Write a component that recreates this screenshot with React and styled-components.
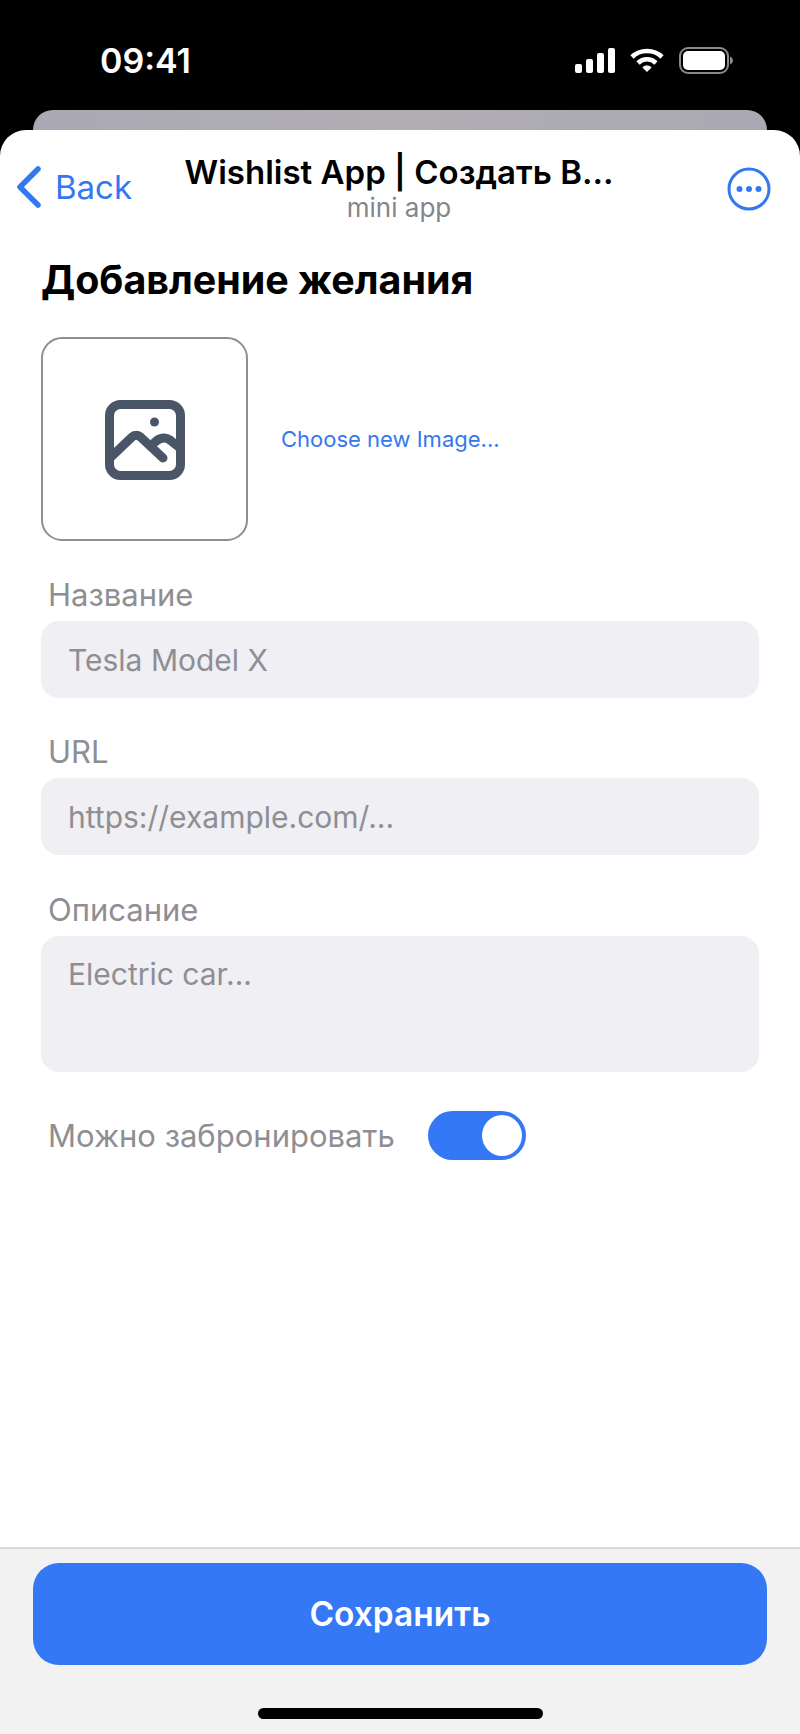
import styled, { createGlobalStyle } from "styled-components";

const GlobalStyle = createGlobalStyle`
  * { box-sizing: border-box; }
  html, body { margin: 0; padding: 0; background: #000; }
  body { font-family: Inter, "Noto Sans", sans-serif; }
`;

const SignalIcon = () => (
  <svg width="40" height="25" viewBox="0 0 40 25" fill="#fff">
    <rect x="0" y="16" width="7" height="9" rx="2" />
    <rect x="11" y="11" width="7" height="14" rx="2" />
    <rect x="22" y="5" width="7" height="20" rx="2" />
    <rect x="33" y="0" width="7" height="25" rx="2" />
  </svg>
);

const WifiIcon = () => (
  <svg width="34" height="25" viewBox="0 0 34 25" fill="none" stroke="#fff" strokeWidth="4.6">
    <path d="M2 9 C10 1 24 1 32 9" />
    <path d="M8 15 C13 10 21 10 26 15" />
    <path d="M17 24 L12.4 19.4 C15 17 19 17 21.6 19.4 Z" fill="#fff" stroke="none" />
  </svg>
);

const BatteryIcon = () => (
  <svg width="54" height="27" viewBox="0 0 54 27">
    <rect x="1" y="1" width="48" height="25" rx="8" fill="none" stroke="#8a8a8e" strokeWidth="2" />
    <rect x="4" y="4" width="42" height="19" rx="5" fill="#fff" />
    <path d="M51 9.5 C53 10.5 54 12 54 13.5 C54 15 53 16.5 51 17.5 Z" fill="#8a8a8e" />
  </svg>
);

const BackIcon = () => (
  <svg width="26" height="44" viewBox="0 0 26 44" fill="none" stroke="#3478f0" strokeWidth="5.5" strokeLinecap="round" strokeLinejoin="round">
    <path d="M22 4 L4 22 L22 40" />
  </svg>
);

const MoreIcon = () => (
  <svg width="44" height="44" viewBox="0 0 44 44">
    <circle cx="22" cy="22" r="20" fill="none" stroke="#3478f0" strokeWidth="3" />
    <circle cx="12.5" cy="22" r="3" fill="#3478f0" />
    <circle cx="22" cy="22" r="3" fill="#3478f0" />
    <circle cx="31.5" cy="22" r="3" fill="#3478f0" />
  </svg>
);

const ImageIcon = () => (
  <svg width="80" height="80" viewBox="0 0 80 80" fill="none" stroke="#4b5568" strokeWidth="9" strokeLinecap="round" strokeLinejoin="round">
    <rect x="4.5" y="4.5" width="71" height="71" rx="11" />
    <path d="M6 57 L27 37 C29.5 34.5 33 34.5 35.5 37 L58 58" strokeLinecap="round" />
    <path d="M49 43 C54 37.5 60 36.5 65 40 L75 48" />
    <circle cx="49.5" cy="22" r="4.5" fill="#4b5568" stroke="none" />
  </svg>
);

const App = () => {
  return (
    <Screen>
      <GlobalStyle />
      <StatusBar>
        <Time>09:41</Time>
        <StatusIcons>
          <SignalIcon />
          <WifiIcon />
          <BatteryIcon />
        </StatusIcons>
      </StatusBar>
      <PeekCard />
      <Sheet>
        <NavBar>
          <BackButton>
            <BackIcon />
            <span>Back</span>
          </BackButton>
          <NavTitle>
            <AppName>Wishlist App | Создать В...</AppName>
            <AppKind>mini app</AppKind>
          </NavTitle>
          <MoreButton>
            <MoreIcon />
          </MoreButton>
        </NavBar>

        <Content>
          <Heading>Добавление желания</Heading>
          <ImageRow>
            <ImageBox>
              <ImageIcon />
            </ImageBox>
            <ChooseLink>Choose new Image...</ChooseLink>
          </ImageRow>

          <Field>
            <Label>Название</Label>
            <Input placeholder="Tesla Model X" />
          </Field>
          <Field>
            <Label>URL</Label>
            <Input placeholder="https://example.com/..." />
          </Field>
          <Field>
            <Label>Описание</Label>
            <TextArea placeholder="Electric car..." />
          </Field>

          <ToggleRow>
            <Label as="span">Можно забронировать</Label>
            <Toggle $on>
              <Knob />
            </Toggle>
          </ToggleRow>
        </Content>

        <Footer>
          <SaveButton>Сохранить</SaveButton>
          <HomeIndicator />
        </Footer>
      </Sheet>
    </Screen>
  );
};

export default App;

const Screen = styled.div`
  background: #000;
  display: flex;
  flex-direction: column;
  height: 1734px;
  overflow: hidden;
  width: 800px;
`;
const StatusBar = styled.div`
  align-items: center;
  color: #fff;
  display: flex;
  height: 110px;
  justify-content: space-between;
  padding: 10px 67px 0 100px;
`;
const Time = styled.div`
  font-size: 34px;
  font-weight: 600;
`;
const StatusIcons = styled.div`
  align-items: center;
  display: flex;
  gap: 15px;
`;
const PeekCard = styled.div`
  background: linear-gradient(90deg, #aaa8b4 0%, #b0aeb2 50%, #aaa8b2 100%);
  border-radius: 20px 20px 0 0;
  flex: none;
  height: 20px;
  margin: 0 33px;
`;
const Sheet = styled.div`
  background: #fff;
  border-radius: 26px 26px 0 0;
  display: flex;
  flex: 1;
  flex-direction: column;
  min-height: 0;
`;
const NavBar = styled.div`
  align-items: center;
  display: grid;
  grid-template-columns: 170px minmax(0, 1fr) 170px;
  height: 112px;
  padding: 0 29px 0 16px;
`;
const BackButton = styled.div`
  align-items: center;
  color: #3478f0;
  display: flex;
  font-size: 33px;
  gap: 13px;
  padding-top: 2px;
`;
const NavTitle = styled.div`
  align-items: center;
  display: flex;
  flex-direction: column;
  padding: 4px 0 0 11px;
`;
const AppName = styled.div`
  color: #000;
  font-size: 33px;
  font-weight: 600;
  line-height: 40px;
  white-space: nowrap;
`;
const AppKind = styled.div`
  color: #85858a;
  font-size: 26px;
  line-height: 32px;
`;
const MoreButton = styled.div`
  display: flex;
  justify-content: flex-end;
  padding-top: 6px;
`;
const Content = styled.div`
  display: flex;
  flex: 1;
  flex-direction: column;
  padding: 15px 41px 0;
`;
const Heading = styled.h1`
  color: #000;
  font-size: 39.4px;
  font-weight: 700;
  line-height: 46px;
  margin: 0 0 34px;
`;
const ImageRow = styled.div`
  align-items: center;
  display: flex;
  gap: 33px;
  margin-bottom: 37px;
`;
const ImageBox = styled.div`
  align-items: center;
  border: 2px solid #8e8e93;
  border-radius: 21px;
  display: flex;
  height: 204px;
  justify-content: center;
  padding-top: 2px;
  width: 207px;
`;
const ChooseLink = styled.div`
  color: #3478f0;
  font-size: 22px;
`;
const Field = styled.div`
  display: flex;
  flex-direction: column;
  margin-bottom: 37.4px;
`;
const Label = styled.label`
  color: #8e8e93;
  font-size: 31px;
  line-height: 34px;
  padding: 0 7px;
`;
const Input = styled.input`
  background: #efeff4;
  border: none;
  border-radius: 18px;
  color: #000;
  font-family: inherit;
  font-size: 30px;
  height: 77px;
  margin-top: 9px;
  outline: none;
  padding: 0 27px;
  width: 100%;

  &::placeholder {
    color: #8e8e93;
    opacity: 1;
  }
`;
const TextArea = styled.textarea`
  background: #efeff4;
  border: none;
  border-radius: 18px;
  display: block;
  font-family: inherit;
  font-size: 30px;
  height: 136px;
  line-height: 36px;
  margin-top: 9px;
  outline: none;
  padding: 20px 27px;
  resize: none;
  width: 100%;

  &::placeholder {
    color: #8e8e93;
    opacity: 1;
  }
`;
const ToggleRow = styled.div`
  align-items: center;
  display: flex;
  gap: 26px;
  margin-top: 2px;
`;
const Toggle = styled.div`
  align-items: center;
  background: ${(p) => (p.$on ? "#3478f6" : "#d1d1d6")};
  border-radius: 25px;
  display: flex;
  height: 49px;
  justify-content: ${(p) => (p.$on ? "flex-end" : "flex-start")};
  padding: 0 4px;
  width: 98px;
`;
const Knob = styled.div`
  background: #fff;
  border-radius: 50%;
  height: 41px;
  width: 40px;
`;
const Footer = styled.div`
  background: #f2f2f3;
  border-top: 2px solid #d8d8da;
  display: flex;
  flex: none;
  flex-direction: column;
  height: 187px;
  padding: 14px 33px 0;
`;
const SaveButton = styled.button`
  background: #3478f6;
  border: none;
  border-radius: 26px;
  color: #fff;
  font-family: inherit;
  font-size: 33.5px;
  font-weight: 600;
  height: 102px;
  width: 100%;
`;
const HomeIndicator = styled.div`
  align-self: center;
  background: #000;
  border-radius: 6px;
  height: 11px;
  margin-top: 43px;
  width: 285px;
`;
